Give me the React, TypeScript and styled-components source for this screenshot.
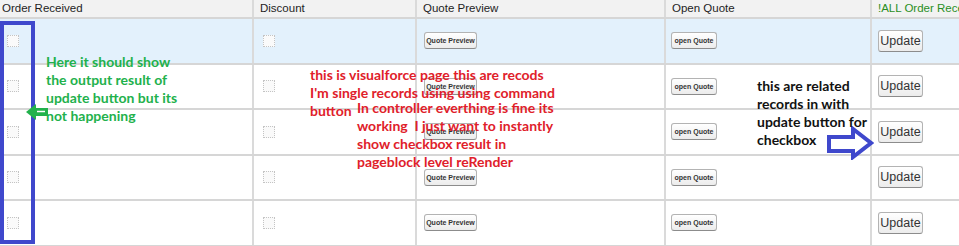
import React from "react";
import styled, { createGlobalStyle } from "styled-components";

const GlobalStyle = createGlobalStyle`
  body {
    margin: 0;
    background: #fff;
    overflow: hidden;
    font-family: "Liberation Sans", Arial, sans-serif;
  }
`;

const Page = styled.div`
  position: relative;
  width: 959px;
  height: 246px;
  overflow: hidden;
`;

const Table = styled.table`
  border-collapse: collapse;
  table-layout: fixed;
  width: 1030px;
`;

const Th = styled.th<{ $green?: boolean; $pad?: number }>`
  height: 16px;
  padding: 0 0 1px ${(p) => p.$pad ?? 6}px;
  background: #f2f2f2;
  border-right: 2px solid #dadada;
  border-bottom: 2px solid #d6d6d6;
  text-align: left;
  font-weight: normal;
  font-size: 11.5px;
  color: ${(p) => (p.$green ? "#2a8f24" : "#1e1e1e")};
  white-space: nowrap;
  overflow: hidden;
`;

const Tr = styled.tr<{ $active?: boolean }>`
  background: ${(p) => (p.$active ? "#e3f1fc" : "#fff")};
`;

const Td = styled.td<{ $pad?: number }>`
  height: 43.5px;
  padding: 0 0 0 ${(p) => p.$pad ?? 6}px;
  border-right: 2px solid #dadada;
  border-bottom: 2px solid #d6d6d6;
  vertical-align: middle;
`;

const Check = styled.span`
  display: block;
  width: 10px;
  height: 10px;
  border: 1px dotted #c4c4c4;
  background: #fafafa;
`;

const SmallButton = styled.button<{ $w: number }>`
  display: block;
  width: ${(p) => p.$w}px;
  height: 17px;
  padding: 0;
  border: 1px solid #b3b3b3;
  border-bottom-color: #8c8c8c;
  border-radius: 3px;
  background: linear-gradient(#ffffff, #ececec);
  font-family: "Liberation Sans", Arial, sans-serif;
  font-size: 7px;
  font-weight: bold;
  color: #333;
  white-space: nowrap;
`;

const UpdateButton = styled.button`
  display: block;
  width: 45px;
  height: 22px;
  padding: 0;
  border: 1px solid #b3b3b3;
  border-bottom-color: #8c8c8c;
  border-radius: 3px;
  background: linear-gradient(#ffffff, #ececec);
  font-family: "Liberation Sans", Arial, sans-serif;
  font-size: 12.5px;
  color: #333;
`;

const Note = styled.div<{ $top: number; $left: number; $color: string }>`
  position: absolute;
  top: ${(p) => p.$top}px;
  left: ${(p) => p.$left}px;
  color: ${(p) => p.$color};
  font-family: Lato, "Open Sans", sans-serif;
  font-weight: bold;
  font-size: 14px;
  line-height: 18px;
  white-space: pre;
`;

const Frame = styled.div`
  position: absolute;
  left: 0;
  top: 21px;
  width: 27px;
  height: 215px;
  border: 4px solid #3f48cc;
`;

const Arrow = styled.svg<{ $top: number; $left: number }>`
  position: absolute;
  top: ${(p) => p.$top}px;
  left: ${(p) => p.$left}px;
`;

const rows = [0, 1, 2, 3, 4];

export default function App() {
  return (
    <Page>
      <GlobalStyle />
      <Table>
        <colgroup>
          <col style={{ width: 253 }} />
          <col style={{ width: 163 }} />
          <col style={{ width: 249 }} />
          <col style={{ width: 206 }} />
          <col style={{ width: 159 }} />
        </colgroup>
        <thead>
          <tr>
            <Th $pad={2}>Order Received</Th>
            <Th>Discount</Th>
            <Th>Quote Preview</Th>
            <Th>Open Quote</Th>
            <Th $green>!ALL Order Received</Th>
          </tr>
        </thead>
        <tbody>
          {rows.map((r) => (
            <Tr key={r} $active={r === 0}>
              <Td $pad={7}>
                <Check />
              </Td>
              <Td $pad={9}>
                <Check />
              </Td>
              <Td $pad={7}>
                <SmallButton $w={53}>Quote Preview</SmallButton>
              </Td>
              <Td $pad={5}>
                <SmallButton $w={46}>open Quote</SmallButton>
              </Td>
              <Td $pad={6}>
                <UpdateButton>Update</UpdateButton>
              </Td>
            </Tr>
          ))}
        </tbody>
      </Table>

      <Frame />

      <Arrow $top={104} $left={26} width={23} height={16} viewBox="0 0 23 16">
        <polygon points="0,8 10,0 10,4 22,4 22,12 10,12 10,16" fill="#22b14c" />
        <line x1="11" y1="7.5" x2="19" y2="7.5" stroke="#fff" strokeWidth="1.5" />
      </Arrow>

      <Arrow $top={126} $left={826} width={48} height={34} viewBox="0 0 48 34">
        <polygon
          points="3,11 27,11 27,3 45,17 27,31 27,25 3,25"
          fill="#fff"
          stroke="#3f48cc"
          strokeWidth="4"
          strokeLinejoin="miter"
        />
      </Arrow>

      <Note $top={53} $left={46} $color="#22b14c">
        {"Here it should show\nthe output result of\nupdate button but its\nnot happening"}
      </Note>

      <Note $top={66} $left={310} $color="#e0202a">
        {"this is visualforce page this are recods\nI'm single records using using command\nbutton"}
      </Note>

      <Note $top={99} $left={357} $color="#e0202a">
        {"In controller everthing is fine its\nworking  I just want to instantly\nshow checkbox result in\npageblock level reRender"}
      </Note>

      <Note $top={77} $left={757} $color="#111">
        {"this are related\nrecords in with\nupdate button for\ncheckbox"}
      </Note>
    </Page>
  );
}
